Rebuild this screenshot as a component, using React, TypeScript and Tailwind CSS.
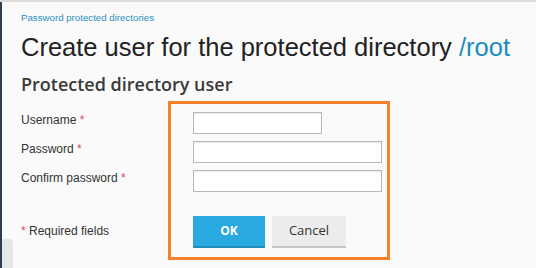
const Star = () => <span className="text-[#d9486a]">*</span>

const labels = ["Username", "Password", "Confirm password"]

export default function App() {
  return (
    <div className="flex h-screen overflow-hidden bg-[#fafafa] border-t-2 border-[#dcdcdc] font-['Liberation_Sans',Arial,sans-serif]">
      <div className="w-[2px] bg-[#2f3f4f]" />
      <div className="w-[11px] flex flex-col">
        <div className="mt-auto h-[29px] bg-[#e6e6e6] rounded-tr-[4px]" />
      </div>
      <main className="flex-1 pl-[8px]">
        <div className="mt-[9px] text-[9.7px] leading-[14px] text-[#2a8fc0]">Password protected directories</div>
        <h1 className="mt-[7px] text-[25.5px] leading-[30px] text-[#222]">
          Create user for the protected directory <span className="text-[#1c8cc0]">/root</span>
        </h1>
        <h2 className="mt-[11px] font-['Open_Sans',sans-serif] font-semibold text-[18px] leading-[22px] text-[#3a3a3a]">
          Protected directory user
        </h2>
        <div className="mt-[6px] flex items-start">
          <div className="w-[147px] flex flex-col pt-[11px] text-[12px] leading-[16px] text-[#333]">
            {labels.map((l) => (
              <div key={l} className="h-[29px]">
                {l} <Star />
              </div>
            ))}
            <div className="mt-[24px]">
              <Star /> Required fields
            </div>
          </div>
          <div className="w-[222px] border-[3px] border-[#f7802a] pl-[22px] pr-[5px] pt-[8px] pb-[9px]">
            <div className="flex flex-col gap-[7px]">
              <input className="w-[129px] h-[22px] bg-white border border-[#b8b8b8] shadow-[inset_0_1px_1px_rgba(0,0,0,0.08)] outline-none" />
              <input type="password" className="w-[189px] h-[22px] bg-white border border-[#b8b8b8] shadow-[inset_0_1px_1px_rgba(0,0,0,0.08)] outline-none" />
              <input type="password" className="w-[189px] h-[22px] bg-white border border-[#b8b8b8] shadow-[inset_0_1px_1px_rgba(0,0,0,0.08)] outline-none" />
            </div>
            <div className="mt-[24px] flex gap-[7px] font-['Open_Sans',sans-serif]">
              <button className="w-[72px] h-[32px] bg-[#28a9e0] border-b-2 border-[#1f8cbb] text-white text-[12px] font-bold">
                OK
              </button>
              <button className="w-[74px] h-[32px] bg-[#ececec] border-b-2 border-[#c6c6c6] text-[#333] text-[13px]">
                Cancel
              </button>
            </div>
          </div>
        </div>
      </main>
    </div>
  )
}
